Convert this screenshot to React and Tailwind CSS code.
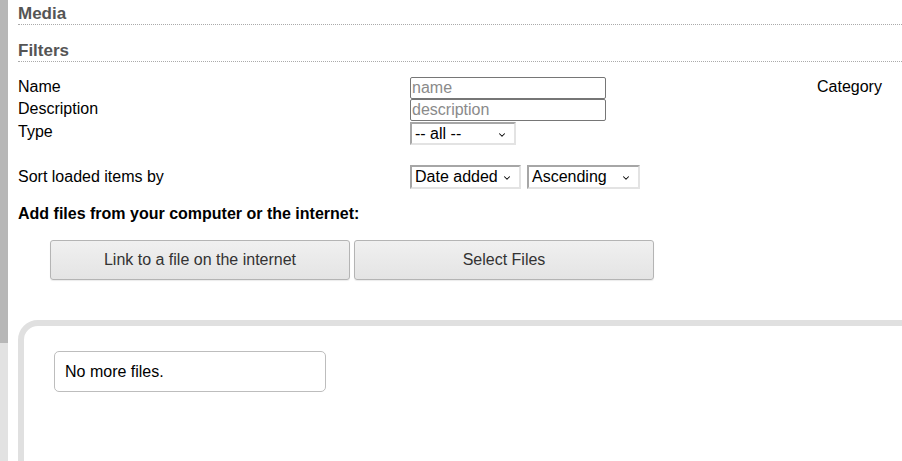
import { ChevronDown } from 'lucide-react';

function Select({ value, width, height }) {
  return (
    <div className={`relative ${width} ${height} border-2 border-[#a6a6a6] border-r-[#e3e3e3] border-b-[#e3e3e3] bg-white`}>
      <div className="pl-[3px] leading-[19px] text-[16px] text-black">{value}</div>
      <ChevronDown className="absolute right-[7px] top-[6px] w-[10px] h-[10px] text-black" strokeWidth={2.5} />
    </div>
  );
}

function TextField({ placeholder }) {
  return (
    <input
      placeholder={placeholder}
      className="w-[196px] h-[22px] border border-[#767676] rounded-[2px] px-[1px] text-[16px] leading-[20px] placeholder:text-[#8a8a8a] outline-none"
    />
  );
}

function Heading({ children }) {
  return (
    <div className="border-b border-dotted border-[#aaaaaa] text-[17px] font-bold text-[#555555] leading-[20px]">
      {children}
    </div>
  );
}

export default function App() {
  return (
    <div className="flex h-[461px] overflow-hidden bg-white font-['Liberation_Sans',Arial,sans-serif] text-[16px] text-black">
      <div className="flex w-[8px] shrink-0 flex-col">
        <div className="h-[343px] bg-[#b7b7b7]" />
        <div className="flex-1 bg-[#e2e2e2]" />
      </div>
      <div className="flex-1 pl-[10px] pt-[4px]">
        <Heading>Media</Heading>
        <div className="mt-[16px]">
          <Heading>Filters</Heading>
        </div>

        <div className="mt-[14px] flex">
          <div className="w-[392px] leading-[22px]">
            <div>Name</div>
            <div>Description</div>
            <div className="mt-[1px]">Type</div>
          </div>
          <div className="flex flex-col pt-[1px]">
            <TextField placeholder="name" />
            <TextField placeholder="description" />
            <div className="mt-[1px]">
              <Select value="-- all --" width="w-[106px]" height="h-[23px]" />
            </div>
          </div>
          <div className="ml-[211px] leading-[22px]">Category</div>
        </div>

        <div className="mt-[20px] flex items-center">
          <div className="w-[392px]">Sort loaded items by</div>
          <div className="flex gap-[6px]">
            <Select value="Date added" width="w-[111px]" height="h-[24px]" />
            <Select value="Ascending" width="w-[113px]" height="h-[24px]" />
          </div>
        </div>

        <div className="mt-[15px] font-bold leading-[20px]">Add files from your computer or the internet:</div>

        <div className="mt-[16px] flex gap-[4px] pl-[32px]">
          <button className="h-[40px] w-[300px] rounded-[3px] border border-[#b4b4b4] bg-gradient-to-b from-[#f0f0f0] to-[#e4e4e4] text-[#333333] shadow-[0_1px_1px_rgba(0,0,0,0.08)]">
            Link to a file on the internet
          </button>
          <button className="h-[40px] w-[300px] rounded-[3px] border border-[#b4b4b4] bg-gradient-to-b from-[#f0f0f0] to-[#e4e4e4] text-[#333333] shadow-[0_1px_1px_rgba(0,0,0,0.08)]">
            Select Files
          </button>
        </div>

        <div className="mt-[40px] -mr-[40px] h-[200px] rounded-tl-[20px] border-[6px] border-[#e0e0e0] pl-[30px] pt-[25px]">
          <div className="flex h-[41px] w-[272px] items-center rounded-[5px] border border-[#bdbdbd] pl-[10px]">
            No more files.
          </div>
        </div>
      </div>
    </div>
  );
}
